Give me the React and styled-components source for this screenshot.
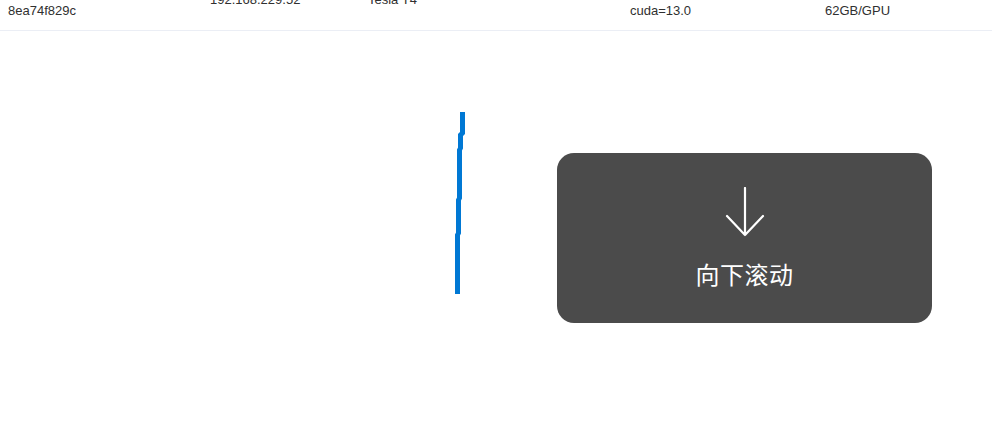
import styled, { createGlobalStyle } from 'styled-components';

const GlobalStyle = createGlobalStyle`
  html, body {
    margin: 0;
    padding: 0;
    background: #ffffff;
    overflow: hidden;
  }

  body {
    font-family: "Liberation Sans", Arial, sans-serif;
  }
`;

const Page = styled.div`
  position: relative;
  width: 100%;
  height: 100vh;
  overflow: hidden;
`;

// the table is scrolled: only the tail of the last row is on screen
const TableBody = styled.div`
  margin-top: -52px;
`;

const Row = styled.div`
  display: grid;
  grid-template-columns: 202px 158px 262px 195px 1fr;
  align-items: center;
  border-bottom: 1px solid #ebeef5;
`;

const Cell = styled.div`
  padding: 8px;
  font-size: 13px;
  line-height: 22px;
  color: #303030;
`;

const Line = styled.div`
  white-space: nowrap;
`;

const DrawLayer = styled.svg`
  position: absolute;
  top: 0;
  left: 0;
  width: 100%;
  height: 100%;
  pointer-events: none;
`;

const Toast = styled.div`
  position: absolute;
  left: 557px;
  top: 153px;
  width: 375px;
  height: 170px;
  box-sizing: border-box;
  padding-top: 34px;
  border-radius: 17px;
  background: #4b4b4b;
  display: flex;
  flex-direction: column;
  align-items: center;
`;

const ToastText = styled.div`
  margin-top: 25px;
  font-family: "Noto Sans CJK SC", "Noto Sans", sans-serif;
  font-size: 24px;
  line-height: 24px;
  color: #ffffff;
  letter-spacing: 0.5px;
`;

const rowCells = [
  ['gpu-node-03', 'GPU-2f61c0d4', '8ea74f829c'],
  ['ubuntu-22.04', '192.168.229.52'],
  ['NVIDIA', 'Tesla T4'],
  ['driver=580.65', 'cuda-toolkit', 'cuda=13.0'],
  ['4 x GPU', '16GB', '62GB/GPU'],
];

const ArrowDown = () => (
  <svg width="44" height="50" viewBox="0 0 44 50" fill="none">
    <path
      d="M22 1V48M4 29L22 48L40 29"
      stroke="#ffffff"
      strokeWidth="2.2"
      strokeLinecap="round"
      strokeLinejoin="round"
    />
  </svg>
);

export default function App() {
  return (
    <Page>
      <GlobalStyle />
      <TableBody>
        <Row>
          {rowCells.map((lines, i) => (
            <Cell key={i}>
              {lines.map((text) => (
                <Line key={text}>{text}</Line>
              ))}
            </Cell>
          ))}
        </Row>
      </TableBody>

      <DrawLayer>
        <path
          d="M462.5 112V133L460.5 135V148L459.5 150V198L458.5 200V233L457.5 235V294"
          stroke="#0078d4"
          strokeWidth="5"
          fill="none"
        />
      </DrawLayer>

      <Toast>
        <ArrowDown />
        <ToastText>向下滚动</ToastText>
      </Toast>
    </Page>
  );
}
